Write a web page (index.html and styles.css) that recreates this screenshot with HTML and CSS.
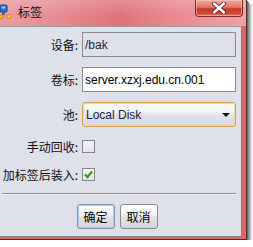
FILE: index.html
```html
<!DOCTYPE html>
<html lang="zh">
<head>
    <meta charset="UTF-8">
    <title>标签</title>
    <link rel="stylesheet" href="styles.css">
</head>
<body>

    <div class="window">
        <div class="titlebar">
            <svg class="app-icon" width="13" height="18" viewBox="0 0 13 18">
                <rect x="1" y="3" width="7" height="7" rx="1" fill="#2f6fd0" stroke="#173f86"/>
                <rect x="2.5" y="4.5" width="4" height="2" fill="#9cc6ff"/>
                <rect x="3" y="10" width="3" height="3" fill="#6a6a6a"/>
                <circle cx="2.5" cy="15" r="2" fill="#f2b21c" stroke="#b07a00" stroke-width="0.6"/>
                <circle cx="10" cy="14.5" r="2.2" fill="#f6c32a" stroke="#b07a00" stroke-width="0.6"/>
            </svg>
            <span class="title">标签</span>
            <div class="close-btn">
                <svg width="18" height="12" viewBox="0 0 18 12">
                    <path d="M4 1.5 L14 10.5 M14 1.5 L4 10.5" stroke="#5a2a2a" stroke-width="4.2" stroke-linecap="round"/>
                    <path d="M4 1.5 L14 10.5 M14 1.5 L4 10.5" stroke="#ffffff" stroke-width="2.4" stroke-linecap="round"/>
                </svg>
            </div>
        </div>

        <div class="content">
            <div class="form">
                <label class="label">设备:</label>
                <input class="field field-disabled" type="text" value="/bak" readonly>

                <label class="label">卷标:</label>
                <input class="field" type="text" value="server.xzxj.edu.cn.001">

                <label class="label">池:</label>
                <div class="combo">
                    <span>Local Disk</span>
                    <span class="combo-arrow"></span>
                </div>

                <label class="label">手动回收:</label>
                <div class="check-cell"><span class="checkbox"></span></div>

                <label class="label">加标签后装入:</label>
                <div class="check-cell">
                    <span class="checkbox">
                        <svg width="11" height="11" viewBox="0 0 11 11">
                            <path d="M2 5.5 L4.5 8 L9 2.5" fill="none" stroke="#2e9a2e" stroke-width="2.2"/>
                        </svg>
                    </span>
                </div>
            </div>

            <div class="separator"></div>

            <div class="buttons">
                <button class="btn btn-default">确定</button>
                <button class="btn">取消</button>
            </div>
        </div>
    </div>

</body>
</html>
```

FILE: styles.css
```css
* {
    box-sizing: border-box;
    margin: 0;
    padding: 0;
}

body {
    background: #ffffff;
    font-family: "Liberation Sans", "Noto Sans CJK SC", sans-serif;
    font-size: 12px;
    color: #000;
}

.window {
    width: 247px;
    background: #e16464;
    border-right: 1px solid #4a2f2f;
    border-bottom: 1px solid #4a2f2f;
    box-shadow: 1px 1px 0 #6a6a6a, 2px 2px 1px #888, 4px 4px 2px rgba(0, 0, 0, 0.35);
}

/* Title bar */
.titlebar {
    height: 26px;
    display: flex;
    align-items: flex-start;
    padding-right: 3px;
    background:
        linear-gradient(180deg, rgba(255, 255, 255, 0.18), rgba(255, 255, 255, 0) 60%),
        linear-gradient(90deg, #eb9ca1 0%, #e58b91 25%, #df737a 48%, #e8888f 70%, #efa2a7 100%);
}

.app-icon {
    margin-top: 2px;
    margin-left: -1px;
    flex-shrink: 0;
}

.title {
    margin-left: 6px;
    margin-top: 5px;
    font-family: "Noto Sans CJK SC", sans-serif;
    font-size: 12px;
    line-height: 14px;
    color: #111;
}

.close-btn {
    margin-left: auto;
    width: 48px;
    height: 17px;
    display: flex;
    justify-content: center;
    align-items: center;
    border: 1px solid #7b2f2a;
    border-top: none;
    border-radius: 0 0 4px 4px;
    background: linear-gradient(180deg, #f0aaa2 0%, #e0766b 45%, #c9382a 55%, #d04a35 85%, #e88070 100%);
    box-shadow: inset 0 0 0 1px rgba(255, 220, 210, 0.45);
}

/* Content panel */
.content {
    margin: 0 4px 2px 0;
    background: #dfe1ea;
    border-top: 1px solid #9a9aa6;
    border-right: 1px solid #7d7f8c;
    border-bottom: 1px solid #7d7f8c;
    padding: 5px 4px 7px 0;
}

.form {
    display: grid;
    grid-template-columns: 78px 154px;
    grid-template-rows: 25px 25px 25px 18px 18px;
    column-gap: 4px;
    row-gap: 10px;
}

.label {
    font-family: "Noto Sans CJK SC", sans-serif;
    font-size: 12px;
    text-align: right;
    align-self: center;
    white-space: nowrap;
    color: #111;
}

.field {
    height: 25px;
    width: 154px;
    border: 1px solid #8b8b8b;
    background: #ffffff;
    padding: 0 2px;
    font-family: "Liberation Sans", sans-serif;
    font-size: 12px;
    color: #000;
    outline: none;
}

.field-disabled {
    background: #dfe1ea;
    color: #1c2340;
}

.combo {
    height: 25px;
    display: flex;
    align-items: center;
    justify-content: space-between;
    padding: 0 5px 0 3px;
    border: 1px solid #d9a24a;
    border-radius: 3px;
    background: linear-gradient(180deg, #fbfbfd 0%, #eeeff3 45%, #e0e1e8 55%, #d8d9e1 100%);
    box-shadow: inset 0 0 0 1px #f6d79c;
    color: #1b1b4e;
}

.combo-arrow {
    width: 0;
    height: 0;
    border-left: 4px solid transparent;
    border-right: 4px solid transparent;
    border-top: 4px solid #111;
}

.check-cell {
    display: flex;
    align-items: center;
}

.checkbox {
    width: 13px;
    height: 13px;
    display: flex;
    align-items: center;
    justify-content: center;
    border: 1px solid #878787;
    background: linear-gradient(180deg, #f6f6f8, #e3e4ea);
}

.separator {
    margin: 10px 1px 0 2px;
    border-top: 1px solid #8e8e92;
    border-bottom: 1px solid #f4f4f8;
}

.buttons {
    display: flex;
    justify-content: center;
    gap: 5px;
    margin-top: 9px;
    padding-right: 3px;
}

.btn {
    width: 38px;
    height: 25px;
    border: 1px solid #8a8a8a;
    border-radius: 3px;
    background: linear-gradient(180deg, #ffffff 0%, #f0f0f3 45%, #dfe0e6 55%, #d6d7de 100%);
    font-family: "Noto Sans CJK SC", sans-serif;
    font-size: 12px;
    color: #000;
}

.btn-default {
    border-color: #7f95b8;
    box-shadow: inset 0 0 0 1px #b7c8e6;
}
```
